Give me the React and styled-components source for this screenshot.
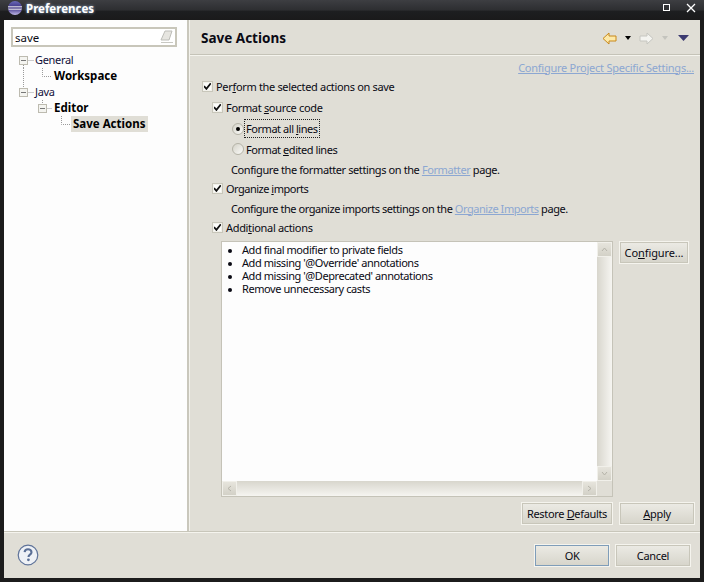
import React from "react";
import styled, { createGlobalStyle } from "styled-components";

const Global = createGlobalStyle`
  html, body { margin: 0; padding: 0; background: #1a1a1a; }
  body { font-family: "Noto Sans", Tahoma, sans-serif; font-size: 11px; letter-spacing: -0.33px; color: #0a0a14; }
  u { text-underline-offset: 1px; }
`;

const Frame = styled.div`
  width: 704px; height: 582px; box-sizing: border-box;
  display: flex; flex-direction: column;
  background: #1c1c1c; padding: 0 4px 4px; overflow: hidden;
`;
const TitleBar = styled.div`
  height: 20px; margin: 0 -4px; padding: 0 8px 0 7px; flex: none;
  display: flex; align-items: center; gap: 3px;
  background: linear-gradient(#3d3e42 0, #2d2e31 50%, #1d1e20 56%, #1a1a1b 100%);
`;
const TitleText = styled.span`
  font: bold 11.5px "Noto Sans", sans-serif; letter-spacing: 0; color: #fff; flex: 1;
  text-shadow: 0 0 3px #9ab6d8; margin-top: -3px;
`;
const WinControls = styled.div`display: flex; gap: 8px; align-items: center; margin: -5px -1px 0 0;`;
const Body = styled.div`flex: 1; display: flex; min-height: 0;`;
const Sidebar = styled.div`
  width: 183px; flex: none; background: #fdfdfd; padding: 7px 0 0 7px; box-sizing: border-box;
`;
const Sash = styled.div`
  width: 2px; flex: none; background: #c9c7bc; border-right: 1px solid #f3f2ec;
`;
const SearchBox = styled.div`
  width: 166px; height: 20px; box-sizing: border-box; border: 2px solid #c8c6ba; background: #fff;
  display: flex; align-items: center; justify-content: space-between; padding: 0 1px 0 2px;
`;
const SearchText = styled.span`font-size: 11.5px; letter-spacing: 0;`;
const Tree = styled.div`margin: 5px 0 0 -7px; display: flex; flex-direction: column;`;
const TreeRow = styled.div`display: flex; height: 16px; align-items: center;`;
const TreeLabel = styled.span`
  font-weight: ${p => (p.$bold ? 700 : 400)};
  font-size: ${p => (p.$bold ? "11.5px" : "11px")};
  letter-spacing: ${p => (p.$bold ? "0" : "-0.33px")};
  color: ${p => (p.$bold ? "#000" : "#10103a")};
  background: ${p => (p.$selected ? "#e0ded6" : "transparent")};
  height: 16px; line-height: 16px;
  margin-left: ${p => (p.$selected ? "-2px" : "0")};
  padding: ${p => (p.$selected ? "0 3px 0 2px" : "0")};
`;
const Panel = styled.div`flex: 1; background: #e0ded6; display: flex; flex-direction: column; min-width: 0;`;
const PanelHeader = styled.div`
  height: 34px; flex: none; box-sizing: border-box; padding: 2px 11px 0 11px;
  display: flex; align-items: center; justify-content: space-between;
`;
const PanelTitle = styled.h1`margin: 0; font: bold 13.5px "Noto Sans", sans-serif; letter-spacing: 0; color: #0a0a14;`;
const Toolbar = styled.div`display: flex; align-items: center;`;
const HeaderRule = styled.div`height: 1px; background: #c5c3b8; border-bottom: 1px solid #f5f4ee; flex: none;`;
const Content = styled.div`flex: 1; display: flex; flex-direction: column; padding: 2px 0 0; min-height: 0;`;
const LinkRow = styled.div`
  height: 18px; display: flex; align-items: center; justify-content: flex-end; padding-right: 6px; letter-spacing: -0.25px;
`;
const Link = styled.a`color: #8ca7d2; text-decoration: underline;`;
const Row = styled.div`
  display: flex; align-items: center; gap: ${p => p.$gap ?? 3}px;
  height: ${p => p.$h}px; padding-left: ${p => p.$indent}px; white-space: nowrap;
  letter-spacing: ${p => p.$spacing ?? -0.33}px;
`;
const Check = styled.span`
  width: 11px; height: 11px; box-sizing: border-box; flex: none;
  border: 1px solid #c8c6ba; outline: 1px solid #f2f1eb; outline-offset: -2px;
  background: #fdfdfb; display: flex; align-items: center; justify-content: center;
`;
const Radio = styled.span`
  width: 12px; height: 12px; box-sizing: border-box; flex: none; border-radius: 50%;
  border: 1px solid #b5b3a7; background: linear-gradient(135deg, #d4d2c8, #fbfbf9);
  display: flex; align-items: center; justify-content: center;
  &::after { content: ""; width: 4px; height: 4px; border-radius: 50%; background: ${p => (p.$on ? "#000" : "transparent")}; }
`;
const Focus = styled.span`outline: 1px dotted #222; outline-offset: 1px;`;
const Label = styled.span``;
const ListArea = styled.div`
  flex: 1; display: flex; align-items: flex-start; gap: 6px; margin-top: 4px; padding-left: 31px; min-height: 0;
`;
const ListBox = styled.div`
  width: 392px; height: 256px; box-sizing: border-box; flex: none; position: relative;
  border: 1px solid #c5c3b8; background: #fdfdfd;
  display: grid; grid-template-columns: 1fr 15px; grid-template-rows: 1fr 15px;
`;
const Items = styled.ul`
  margin: 0; padding: 1px 0 0 20px; list-style: disc; line-height: 13px; overflow: hidden; letter-spacing: -0.42px;
  li::marker { font-size: 10px; }
`;
const VTrack = styled.div`
  background: linear-gradient(90deg, #d8d6cd, #f6f5f1); display: flex; flex-direction: column; justify-content: space-between;
`;
const HTrack = styled.div`
  background: linear-gradient(#d8d6cd, #f6f5f1); display: flex; justify-content: space-between;
`;
const Corner = styled.div`background: #e0ded6;`;
const ScrollBtn = styled.div`
  width: 15px; height: 15px; box-sizing: border-box; border: 1px solid #f1f0ea; background: linear-gradient(#e6e4dc, #d3d1c7);
  display: flex; align-items: center; justify-content: center;
`;
const Button = styled.button`
  box-sizing: border-box; width: ${p => p.$w}px; height: 23px; padding: 0; margin: 0; flex: none;
  border: 1px solid #f5f4ee; outline: 1px solid #c8c6ba; outline-offset: -2px;
  background: linear-gradient(#ecebe5, #d6d4ca);
  font: 11px "Noto Sans", sans-serif; letter-spacing: ${p => p.$spacing ?? -0.33}px; color: #0a0a14;
  ${p => p.$default && "outline-color: #7f9db9;"}
`;
const SideButtons = styled.div`display: flex; justify-content: flex-end; gap: 6px; padding: 6px 5px 6px 0; flex: none;`;
const Footer = styled.div`
  height: 47px; flex: none; box-sizing: border-box; background: #e0ded6;
  border-top: 1px solid #c8c6ba; box-shadow: inset 0 1px 0 #f5f4ee;
  display: flex; align-items: center; justify-content: space-between; padding: 0 9px 0 13px;
`;
const FooterButtons = styled.div`display: flex; gap: 5px; margin-top: 1px;`;

const CheckMark = () => (
  <svg width="9" height="9" viewBox="0 0 9 9"><path d="M1 4.2 L3.4 6.8 L7.8 1.2" fill="none" stroke="#111" strokeWidth="1.8" /></svg>
);

const dotted = { stroke: "#9a9a9a", strokeWidth: 1, strokeDasharray: "1 1", fill: "none" };
const Expander = ({ x, y = 8 }) => (
  <g>
    <rect x={x + 0.5} y={y - 3.5} width="8" height="8" fill="#f4f4f0" stroke="#bdbbb0" />
    <path d={`M${x + 2} ${y + 0.5}H${x + 7}`} stroke="#777" />
  </g>
);
const Gutter = ({ w, children }) => (
  <svg width={w} height="16" viewBox={`4 0 ${w} 16`} style={{ flex: "none" }}>{children}</svg>
);

const Eraser = () => (
  <svg width="14" height="14" viewBox="0 0 14 14">
    <path d="M5 1h7L9 10H1z" fill="#e6e5e0" stroke="#bdbdb8" />
    <path d="M1 12.5h12" stroke="#c8c8c2" />
  </svg>
);
const ArrowLeft = () => (
  <svg width="15" height="13" viewBox="0 0 15 13" style={{ marginRight: 8 }}>
    <path d="M1 6.5 L7 1 V4 H14 V9 H7 V12 Z" fill="#fde9a8" stroke="#c8881a" />
  </svg>
);
const ArrowRight = () => (
  <svg width="15" height="13" viewBox="0 0 15 13" style={{ marginRight: 8 }}>
    <path d="M14 6.5 L8 1 V4 H1 V9 H8 V12 Z" fill="#f4f4f0" stroke="#c6c6c0" />
  </svg>
);
const Drop = ({ color, mr }) => (
  <svg width="6" height="4" viewBox="0 0 6 4" style={{ marginRight: mr }}>
    <path d="M0 0H6L3 4Z" fill={color} />
  </svg>
);
const ViewMenu = () => (
  <svg width="11" height="6" viewBox="0 0 11 6"><path d="M0 0H11L5.5 6Z" fill="#3c3a70" /></svg>
);
const Help = () => (
  <svg width="22" height="22" viewBox="0 0 22 22">
    <circle cx="11" cy="11" r="9.8" fill="#eef1f6" stroke="#5f7399" strokeWidth="1.2" />
    <path d="M7.6 8.2C7.8 6 9.5 5.3 11 5.3c2 0 3.5 1.1 3.5 2.9 0 2.5-3 2.4-3 4.7" fill="none" stroke="#5a6f96" strokeWidth="2.1" />
    <circle cx="11.4" cy="15.8" r="1.4" fill="#5a6f96" />
  </svg>
);
const Chevron = ({ d }) => (
  <svg width="7" height="7" viewBox="0 0 7 7"><path d={d} fill="none" stroke="#b5b3a9" /></svg>
);

export default function App() {
  return (
    <Frame>
      <Global />
      <TitleBar>
        <svg width="16" height="16" viewBox="0 0 16 16" style={{ marginTop: -5 }}>
          <defs>
            <linearGradient id="ec" x1="0" y1="0" x2="0" y2="1">
              <stop offset="0" stopColor="#6a6ab8" /><stop offset="0.5" stopColor="#3a2f80" /><stop offset="1" stopColor="#c0b8e8" />
            </linearGradient>
          </defs>
          <circle cx="8" cy="8" r="7" fill="url(#ec)" />
          <path d="M1 6.5H15M1 8H15M1.5 9.5H14.5" stroke="#eee" strokeWidth="0.7" />
        </svg>
        <TitleText>Preferences</TitleText>
        <WinControls>
          <svg width="14" height="14" viewBox="0 0 14 14" style={{ marginRight: 4 }}><rect x="4.5" y="3.5" width="6" height="6" fill="none" stroke="#fff" strokeWidth="1" /><path d="M4 3.5H11" stroke="#fff" /></svg>
          <svg width="12" height="12" viewBox="0 0 12 12"><path d="M2 2L10 10M10 2L2 10" stroke="#fff" strokeWidth="1.3" /></svg>
        </WinControls>
      </TitleBar>
      <Body>
        <Sidebar>
          <SearchBox>
            <SearchText>save</SearchText>
            <Eraser />
          </SearchBox>
          <Tree>
            <TreeRow>
              <Gutter w={31}>
                <Expander x={19} />
                <path d="M28.5 8.5H33.5M23.5 13V16" {...dotted} />
              </Gutter>
              <TreeLabel>General</TreeLabel>
            </TreeRow>
            <TreeRow>
              <Gutter w={50}>
                <path d="M23.5 0V16M42.5 0V8.5H52" {...dotted} />
              </Gutter>
              <TreeLabel $bold>Workspace</TreeLabel>
            </TreeRow>
            <TreeRow>
              <Gutter w={31}>
                <path d="M23.5 0V4M28.5 8.5H33.5" {...dotted} />
                <Expander x={19} />
              </Gutter>
              <TreeLabel>Java</TreeLabel>
            </TreeRow>
            <TreeRow>
              <Gutter w={50}>
                <path d="M42.5 0V4M47.5 8.5H52" {...dotted} />
                <Expander x={38} />
              </Gutter>
              <TreeLabel $bold>Editor</TreeLabel>
            </TreeRow>
            <TreeRow>
              <Gutter w={69}>
                <path d="M61.5 0V8.5H71" {...dotted} />
              </Gutter>
              <TreeLabel $bold $selected>Save Actions</TreeLabel>
            </TreeRow>
          </Tree>
        </Sidebar>
        <Sash />
        <Panel>
          <PanelHeader>
            <PanelTitle>Save Actions</PanelTitle>
            <Toolbar>
              <ArrowLeft />
              <Drop color="#000" mr={8} />
              <ArrowRight />
              <Drop color="#c4c4be" mr={10} />
              <ViewMenu />
            </Toolbar>
          </PanelHeader>
          <HeaderRule />
          <Content>
            <LinkRow><Link>Configure Project Specific Settings...</Link></LinkRow>
            <Row $h={20} $indent={12}><Check><CheckMark /></Check><Label>Per<u>f</u>orm the selected actions on save</Label></Row>
            <Row $h={22} $indent={22}><Check><CheckMark /></Check><Label>Format <u>s</u>ource code</Label></Row>
            <Row $h={21} $indent={42} $gap={2} $spacing={-0.45}><Radio $on /><Focus>Format all <u>l</u>ines</Focus></Row>
            <Row $h={20} $indent={42} $gap={2} $spacing={-0.45}><Radio /><Label>Format <u>e</u>dited lines</Label></Row>
            <Row $h={20} $indent={41} $spacing={-0.4}><Label>Configure the formatter settings on the <Link>Formatter</Link> page.</Label></Row>
            <Row $h={19} $indent={22} $spacing={-0.5}><Check><CheckMark /></Check><Label>Organize <u>i</u>mports</Label></Row>
            <Row $h={20} $indent={41} $spacing={-0.45}><Label>Configure the organize imports settings on the <Link>Organize Imports</Link> page.</Label></Row>
            <Row $h={19} $indent={22}><Check><CheckMark /></Check><Label>Addi<u>t</u>ional actions</Label></Row>
            <ListArea>
              <ListBox>
                <Items>
                  <li>Add final modifier to private fields</li>
                  <li>Add missing '@Override' annotations</li>
                  <li>Add missing '@Deprecated' annotations</li>
                  <li>Remove unnecessary casts</li>
                </Items>
                <VTrack>
                  <ScrollBtn><Chevron d="M1 5L3.5 2L6 5" /></ScrollBtn>
                  <ScrollBtn><Chevron d="M1 2L3.5 5L6 2" /></ScrollBtn>
                </VTrack>
                <HTrack>
                  <ScrollBtn><Chevron d="M5 1L2 3.5L5 6" /></ScrollBtn>
                  <ScrollBtn><Chevron d="M2 1L5 3.5L2 6" /></ScrollBtn>
                </HTrack>
                <Corner />
              </ListBox>
              <Button $w={70} $spacing={-0.1}>Co<u>n</u>figure...</Button>
            </ListArea>
            <SideButtons>
              <Button $w={92}>Restore <u>D</u>efaults</Button>
              <Button $w={76}><u>A</u>pply</Button>
            </SideButtons>
          </Content>
        </Panel>
      </Body>
      <Footer>
        <Help />
        <FooterButtons>
          <Button $w={76} $default>OK</Button>
          <Button $w={76}>Cancel</Button>
        </FooterButtons>
      </Footer>
    </Frame>
  );
}
